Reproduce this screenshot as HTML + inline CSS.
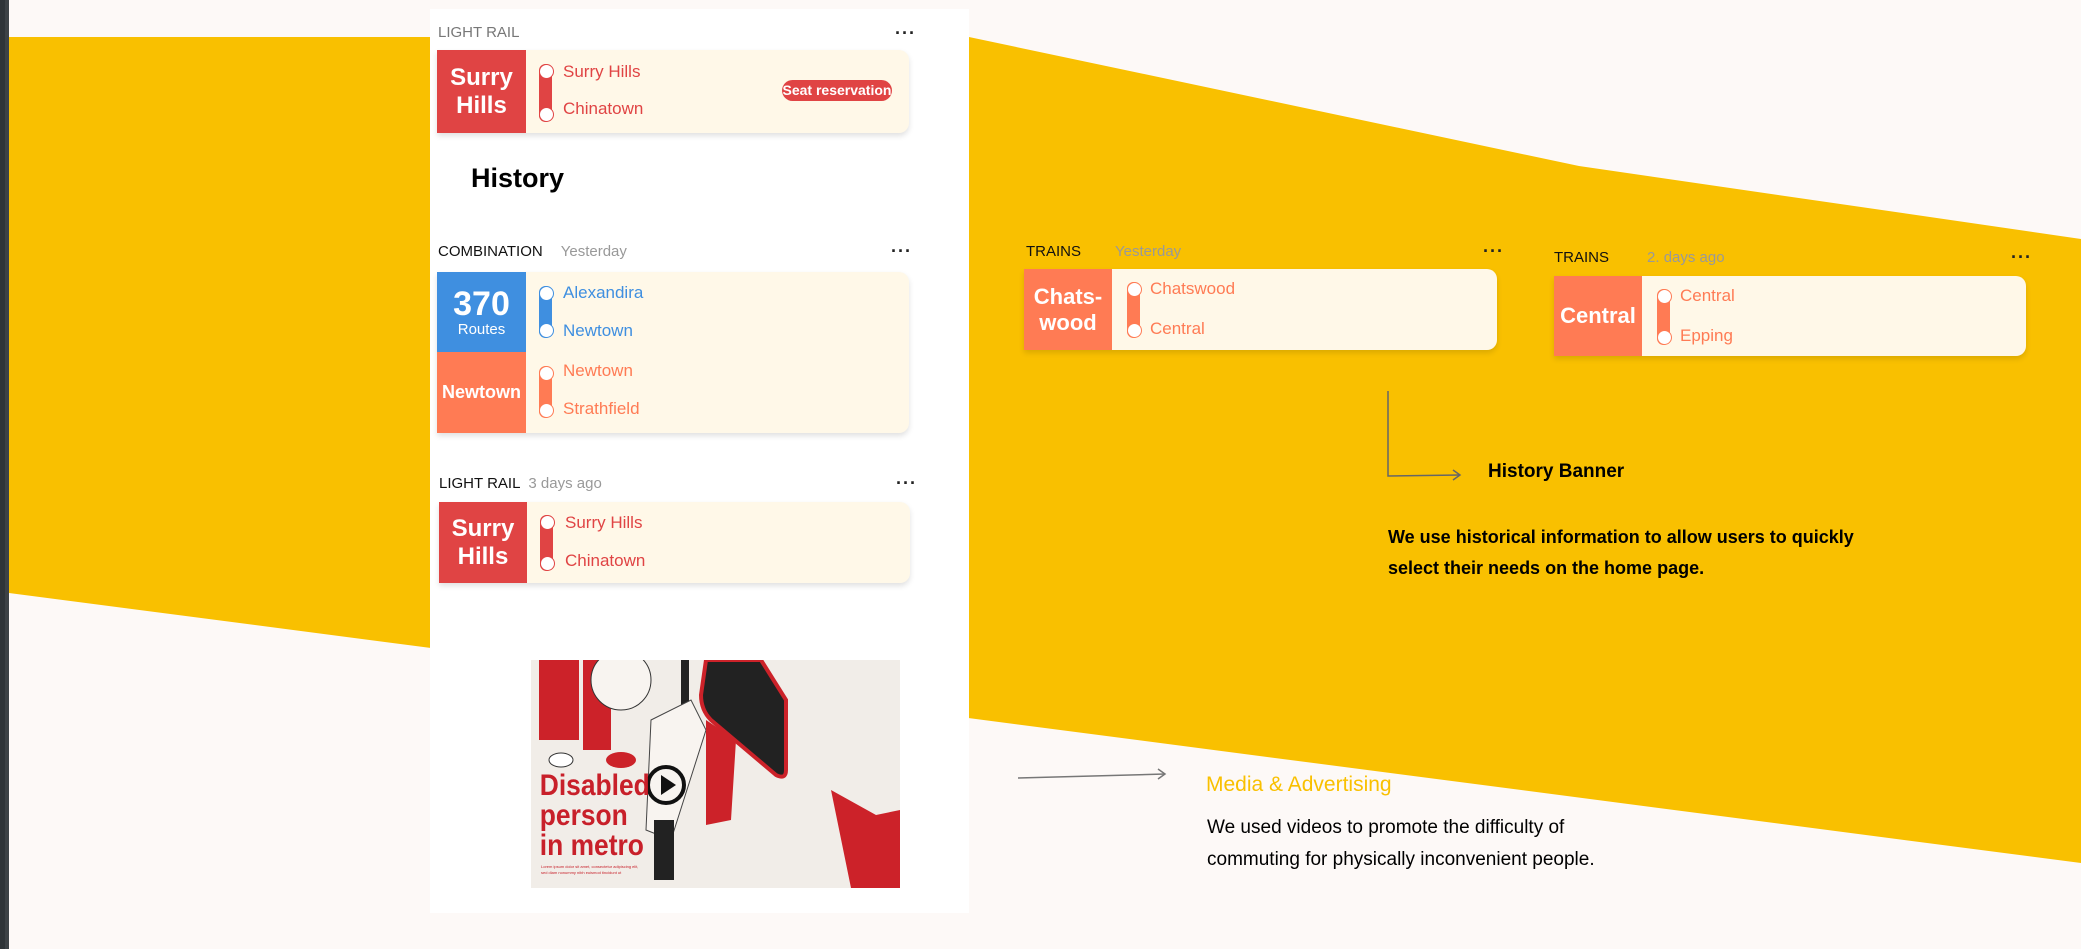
<!DOCTYPE html>
<html><head><meta charset="utf-8"><style>
*{margin:0;padding:0;box-sizing:border-box}
body{width:2081px;height:949px;overflow:hidden;background:#fdf9f7;font-family:"Liberation Sans",sans-serif;position:relative}
.a{position:absolute}
.lbl{font-size:15px;color:#111;white-space:nowrap}
.lbl span{color:#999;margin-left:30px}
.dots{font-size:18px;font-weight:bold;letter-spacing:1px;color:#222}
.card{position:absolute;background:#fff8e8;border-radius:0 10px 10px 0;box-shadow:0 3px 6px rgba(0,0,0,.12)}
.blk{position:absolute;left:0;color:#fff;font-weight:bold;display:flex;align-items:center;justify-content:center;text-align:center}
.pill{position:absolute;width:13px;border-radius:7px}
.pill:before,.pill:after{content:"";position:absolute;left:0;width:13px;height:13px;border-radius:50%;background:#fff;border:1px solid currentColor}
.pill:before{top:0}.pill:after{bottom:0}
.st{position:absolute;font-size:17px;white-space:nowrap}
</style></head><body>
<svg class="a" style="left:0;top:0" width="2081" height="949">
<polygon points="9,37 969,37 1579,166 2081,239 2081,863 9,593" fill="#f9c000"/>
<rect x="0" y="0" width="5" height="949" fill="#2f3438"/><rect x="5" y="0" width="4" height="949" fill="#3d4246"/>
<polyline points="1388,391 1388,476 1460,475" fill="none" stroke="#666" stroke-width="1.5"/>
<polyline points="1453,470 1460,475 1453,480" fill="none" stroke="#666" stroke-width="1.5"/>
<line x1="1018" y1="778" x2="1165" y2="774" stroke="#777" stroke-width="1.5"/>
<polyline points="1158,769 1165,774 1158,779" fill="none" stroke="#777" stroke-width="1.5"/>
</svg>
<div class="a" style="left:430px;top:9px;width:539px;height:904px;background:#fff"></div>

<div class="a lbl" style="left:438px;top:24px;color:#777">LIGHT RAIL</div>
<div class="a dots" style="left:895px;top:23px">···</div>
<div class="card" style="left:437px;top:50px;width:472px;height:83px">
 <div class="blk" style="width:89px;height:83px;background:#e04444;font-size:24px;line-height:28px">Surry<br>Hills</div>
 <div class="pill" style="left:102px;top:14px;height:58px;background:#e04444;color:#e04444"></div>
 <div class="st" style="left:126px;top:12px;color:#e04444">Surry Hills</div>
 <div class="st" style="left:126px;top:49px;color:#e04444">Chinatown</div>
 <div class="a" style="left:345px;top:30px;width:110px;height:21px;border-radius:11px;background:#e04444;color:#fff;font-size:14px;font-weight:bold;text-align:center;line-height:21px">Seat reservation</div>
</div>

<div class="a" style="left:471px;top:163px;font-size:27px;font-weight:bold;color:#000">History</div>

<div class="a lbl" style="left:438px;top:243px">COMBINATION<span style="margin-left:18px">Yesterday</span></div>
<div class="a dots" style="left:891px;top:241px">···</div>
<div class="card" style="left:437px;top:272px;width:472px;height:161px">
 <div class="blk" style="width:89px;height:80px;top:0;background:#3f8fe0;flex-direction:column"><div style="font-size:34px;line-height:34px">370</div><div style="font-size:15px;font-weight:normal">Routes</div></div>
 <div class="blk" style="width:89px;height:81px;top:80px;background:#ff7b54;font-size:18px">Newtown</div>
 <div class="pill" style="left:102px;top:14px;height:52px;background:#3f8fe0;color:#3f8fe0"></div>
 <div class="pill" style="left:102px;top:94px;height:52px;background:#ff7b54;color:#ff7b54"></div>
 <div class="st" style="left:126px;top:11px;color:#3f8fe0">Alexandira</div>
 <div class="st" style="left:126px;top:49px;color:#3f8fe0">Newtown</div>
 <div class="st" style="left:126px;top:89px;color:#ff7b54">Newtown</div>
 <div class="st" style="left:126px;top:127px;color:#ff7b54">Strathfield</div>
</div>

<div class="a lbl" style="left:439px;top:475px">LIGHT RAIL<span style="margin-left:8px">3 days ago</span></div>
<div class="a dots" style="left:896px;top:473px">···</div>
<div class="card" style="left:439px;top:502px;width:471px;height:81px">
 <div class="blk" style="width:88px;height:81px;background:#e04444;font-size:24px;line-height:28px">Surry<br>Hills</div>
 <div class="pill" style="left:101px;top:13px;height:56px;background:#e04444;color:#e04444"></div>
 <div class="st" style="left:126px;top:11px;color:#e04444">Surry Hills</div>
 <div class="st" style="left:126px;top:49px;color:#e04444">Chinatown</div>
</div>

<svg class="a" style="left:531px;top:660px" width="369" height="228" viewBox="0 0 369 228">
<rect width="369" height="228" fill="#f1ede8"/>
<rect x="8" y="0" width="40" height="80" fill="#cc2229"/>
<rect x="52" y="0" width="28" height="90" fill="#cc2229"/>
<ellipse cx="90" cy="20" rx="30" ry="30" fill="#f8f4f0" stroke="#333"/>
<rect x="150" y="0" width="8" height="70" fill="#222"/>
<path d="M175 0 L230 0 L255 40 L255 110 Q255 120 245 115 L180 60 Q170 50 170 35 Z" fill="#222" stroke="#cc2229" stroke-width="4"/>
<path d="M120 60 L160 40 L175 70 L140 180 L115 170 Z" fill="#f8f4f0" stroke="#444"/>
<path d="M175 60 L205 80 L200 160 L175 165 Z" fill="#cc2229"/>
<rect x="123" y="160" width="20" height="60" fill="#222"/>
<path d="M300 130 L345 155 L369 150 L369 228 L320 228 Z" fill="#cc2229"/>
<ellipse cx="90" cy="100" rx="15" ry="8" fill="#cc2229"/><ellipse cx="30" cy="100" rx="12" ry="7" fill="#fff" stroke="#333"/>
<circle cx="135" cy="125" r="18" fill="none" stroke="#111" stroke-width="4"/>
<polygon points="130,115 145,125 130,135" fill="#111"/>
<text x="10" y="135" font-family="Liberation Sans" font-weight="bold" font-size="30" fill="#c8202a" transform="scale(0.88 1)" >Disabled</text>
<text x="10" y="165" font-family="Liberation Sans" font-weight="bold" font-size="30" fill="#c8202a" transform="scale(0.88 1)">person</text>
<text x="10" y="195" font-family="Liberation Sans" font-weight="bold" font-size="30" fill="#c8202a" transform="scale(0.88 1)">in metro</text>
<text x="10" y="208" font-family="Liberation Sans" font-size="4" fill="#c8202a">Lorem ipsum dolor sit amet, consectetur adipiscing elit,</text>
<text x="10" y="214" font-family="Liberation Sans" font-size="4" fill="#c8202a">sed diam nonummy nibh euismod tincidunt ut</text>
</svg>

<div class="a lbl" style="left:1026px;top:243px">TRAINS<span style="margin-left:34px">Yesterday</span></div>
<div class="a dots" style="left:1483px;top:241px">···</div>
<div class="card" style="left:1024px;top:269px;width:473px;height:81px">
 <div class="blk" style="width:88px;height:81px;background:#ff7b54;font-size:22px;line-height:26px">Chats-<br>wood</div>
 <div class="pill" style="left:103px;top:13px;height:56px;background:#ff7b54;color:#ff7b54"></div>
 <div class="st" style="left:126px;top:10px;color:#ff7b54">Chatswood</div>
 <div class="st" style="left:126px;top:50px;color:#ff7b54">Central</div>
</div>

<div class="a lbl" style="left:1554px;top:249px">TRAINS<span style="margin-left:38px">2. days ago</span></div>
<div class="a dots" style="left:2011px;top:247px">···</div>
<div class="card" style="left:1554px;top:276px;width:472px;height:80px">
 <div class="blk" style="width:88px;height:80px;background:#ff7b54;font-size:22px">Central</div>
 <div class="pill" style="left:103px;top:13px;height:56px;background:#ff7b54;color:#ff7b54"></div>
 <div class="st" style="left:126px;top:10px;color:#ff7b54">Central</div>
 <div class="st" style="left:126px;top:50px;color:#ff7b54">Epping</div>
</div>

<div class="a" style="left:1488px;top:461px;font-size:19px;font-weight:bold;color:#000">History Banner</div>
<div class="a" style="left:1388px;top:522px;font-size:18px;font-weight:bold;color:#000;line-height:31px;width:520px">We use historical information to allow users to quickly<br>select their needs on the home page.</div>

<div class="a" style="left:1206px;top:773px;font-size:21px;color:#f9c000">Media &amp; Advertising</div>
<div class="a" style="left:1207px;top:812px;font-size:19px;color:#000;line-height:32px">We used videos to promote the difficulty of<br>commuting for physically inconvenient people.</div>
</body></html>
